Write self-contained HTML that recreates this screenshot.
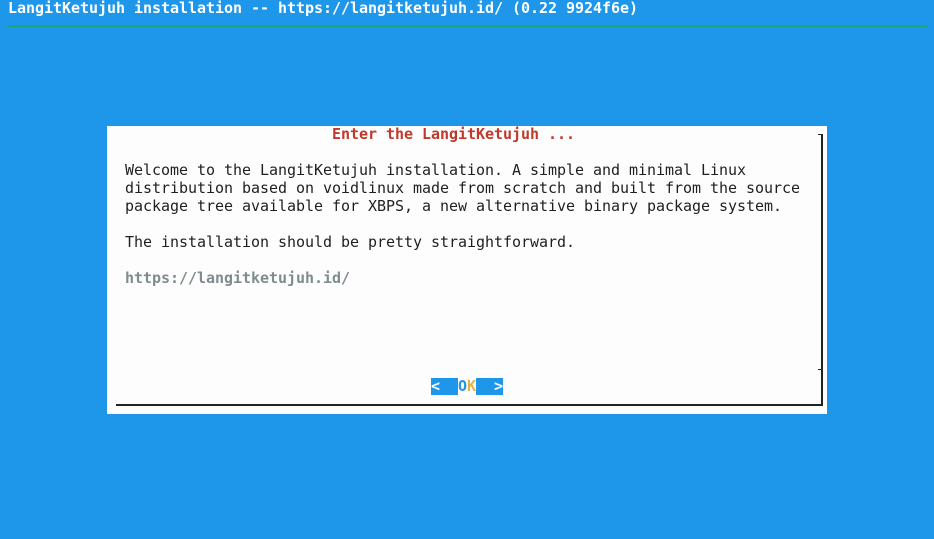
<!DOCTYPE html>
<html><head><style>
body{margin:0;width:934px;height:539px;background:#1e96ea;position:relative;overflow:hidden;font-family:"DejaVu Sans Mono","Liberation Mono",monospace;font-size:15px}
.t{position:absolute;white-space:pre;line-height:18px;letter-spacing:-0.03px}
</style></head><body>
<div class="t" style="left:8px;top:-1px;color:#fff;font-weight:bold">LangitKetujuh installation -- https://langitketujuh.id/ (0.22 9924f6e)</div>
<div style="position:absolute;left:8px;top:25px;width:919px;height:2px;background:#1ea37a"></div>
<div style="position:absolute;left:107px;top:126px;width:720px;height:288px;background:#fdfdfd"></div>
<div style="position:absolute;left:821px;top:134px;width:2px;height:271px;background:#222"></div>
<div style="position:absolute;left:818px;top:134px;width:4px;height:1px;background:#222"></div>
<div style="position:absolute;left:818px;top:369px;width:4px;height:1px;background:#222"></div>
<div style="position:absolute;left:116px;top:404px;width:707px;height:2px;background:#222"></div>
<div class="t" style="left:332px;top:125px;color:#c0392b;font-weight:bold">Enter the LangitKetujuh ...</div>
<div class="t" style="left:125px;top:161px;color:#1f1f1f">Welcome to the LangitKetujuh installation. A simple and minimal Linux
distribution based on voidlinux made from scratch and built from the source
package tree available for XBPS, a new alternative binary package system.

The installation should be pretty straightforward.

<span style="color:#7f8c8d;font-weight:bold">https://langitketujuh.id/</span></div>
<div style="position:absolute;left:431px;top:378px;width:72px;height:17px;background:#1e96ea"></div>
<div class="t" style="left:431px;top:377px;color:#fff;font-weight:bold">&lt;  <span style="background:#fff;color:#1e96ea">O</span><span style="background:#fff;color:#e2b23c">K</span>  &gt;</div>
</body></html>
